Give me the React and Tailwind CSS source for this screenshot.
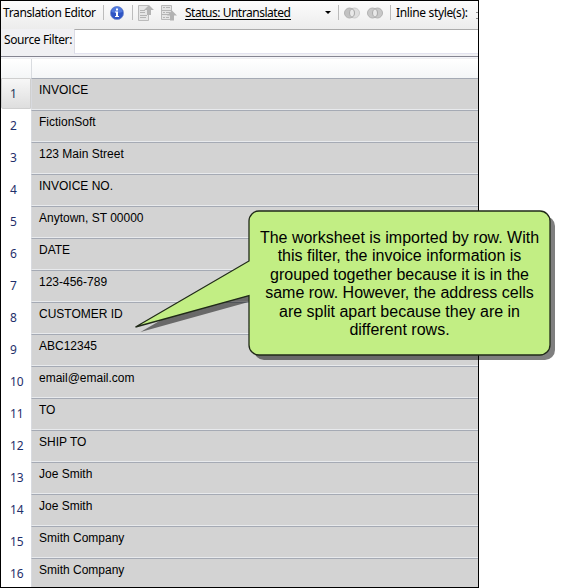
import React from "react";

const rows = [
  "INVOICE",
  "FictionSoft",
  "123 Main Street",
  "INVOICE NO.",
  "Anytown, ST 00000",
  "DATE",
  "123-456-789",
  "CUSTOMER ID",
  "ABC12345",
  "email@email.com",
  "TO",
  "SHIP TO",
  "Joe Smith",
  "Joe Smith",
  "Smith Company",
  "Smith Company",
];

const message = [
  "The worksheet is imported by row. With",
  "this filter, the invoice information is",
  "grouped together because it is in the",
  "same row. However, the address cells",
  "are split apart because they are in",
  "different rows.",
];

function Separator({ className }) {
  return <span className={`h-[15px] w-px shrink-0 bg-[#bcbcbc] ${className}`} />;
}

function InfoIcon() {
  return (
    <svg className="ml-[6px] shrink-0" width="14" height="14" viewBox="0 0 14 14">
      <circle cx="7" cy="7" r="6.6" fill="#2f55c4" stroke="#7d93cf" strokeWidth="0.8" />
      <path d="M1.5 6a5.5 5.5 0 0 1 11 0Q7 8 1.5 6z" fill="#5078dc" />
      <path d="M6 2.5h2v2H6zM5 5.5h3v4.5h1v1H5v-1h1V6.500H5z" fill="#fff" />
    </svg>
  );
}

function PageUpIcon({ low, className }) {
  return (
    <svg className={`shrink-0 ${className}`} width="16" height="16" viewBox="0 0 16 16">
      {low ? (
        <g>
          <path d="M.5.5h10v14H.5z" fill="#e4e4e4" stroke="#b9b9b9" />
          <path d="M.5 5.500h10M.5 9.500h10M2 2.500h2M5 2.500h4M2 7.500h2M5 7.500h4M2 12.500h2M5 12.500h3" stroke="#b4b4b4" />
          <path d="M11 5.500l5 5h-3V15.500H9v-5H6z" fill="#b2b2b2" />
        </g>
      ) : (
        <g>
          <path d="M.5.5h10v15H.5z" fill="#e6e6e6" stroke="#bbb" />
          <path d="M2 5.500h5M2 7.500h5M2 10.500h7M2 12.500h6" stroke="#b4b4b4" />
          <path d="M11 0l5 5h-3v5H9V5H6z" fill="#b4b4b4" />
        </g>
      )}
    </svg>
  );
}

function CirclesIcon({ variant, className }) {
  const joined = variant === "join";
  return (
    <svg className={`shrink-0 ${className}`} width="16" height="12" viewBox="0 0 16 12">
      <circle cx="10.500" cy="6" r="5" fill={joined ? "#c8c8c8" : "#dedede"} stroke={joined ? "#b2b2b2" : "#cacaca"} />
      <circle cx="5.500" cy="6" r="5" fill={joined ? "#c8c8c8" : "#c2c2c2"} stroke="#b2b2b2" />
      <path d="M8 1.700a5 5 0 0 1 0 8.600a5 5 0 0 1 0-8.600z" fill="#e9e9e9" stroke="#a6a6a6" strokeWidth="0.9" />
    </svg>
  );
}

function Toolbar() {
  return (
    <div className="flex h-[28px] shrink-0 items-center overflow-hidden bg-linear-to-b from-[#fcfcfc] to-[#ececec] pb-[5px] font-['Noto_Sans','Open_Sans',sans-serif] text-[12px] leading-[16px] whitespace-nowrap text-black">
      <span className="ml-[2px] w-[94px] shrink-0 tracking-[-0.38px]">Translation Editor</span>
      <Separator className="ml-[6px]" />
      <InfoIcon />
      <Separator className="ml-[8px]" />
      <PageUpIcon className="ml-[5px]" />
      <PageUpIcon low className="ml-[7px]" />
      <span className="mt-[2px] ml-[8px] w-[106px] shrink-0 border-b border-black leading-[12px] tracking-[-0.48px]">Status: Untranslated</span>
      <span className="ml-[34px] h-0 w-0 shrink-0 border-x-[3px] border-t-[3px] border-x-transparent border-t-black" />
      <Separator className="ml-[7px]" />
      <CirclesIcon className="ml-[5px]" />
      <CirclesIcon variant="join" className="ml-[7px]" />
      <Separator className="ml-[7px]" />
      <span className="ml-[5px] w-[73px] shrink-0 tracking-[-0.35px]">Inline style(s):</span>
      <span className="mt-[6px] ml-[7px] h-[7px] w-[2px] shrink-0 border-t border-b border-[#8c8c8c]" />
    </div>
  );
}

function Row({ text, number }) {
  return (
    <div className="flex h-[32px] shrink-0">
      <div
        className={`h-[31px] w-[30px] shrink-0 font-['Noto_Sans','Open_Sans',sans-serif] text-[12px] tracking-[-0.1px] ${
          number === 1
            ? "rounded-bl-[2px] border border-[#cfcfcf] bg-linear-to-b from-[#f7f7f7] to-[#dedede] pl-[8px] leading-[30px] text-[#1e395b]"
            : "bg-white pl-[9px] leading-[32px] text-[#1f2f6b]"
        }`}
      >
        {number}
      </div>
      <div className="min-w-0 flex-1 border-t border-b border-l border-t-[#a5aab4] border-b-[#e8eaed] border-l-[#d8dadf] bg-[#d3d3d3] pl-[7px] text-[12px] leading-[22px] text-black">
        {text}
      </div>
    </div>
  );
}

function Callout() {
  return (
    <div className="absolute top-[205px] left-[130px] h-[160px] w-[430px]">
      <svg className="absolute inset-0" width="430" height="160" viewBox="0 0 430 160">
        <path
          d="M129 6h281a10 10 0 0 1 10 10v124a10 10 0 0 1-10 10H129a10 10 0 0 1-10-10V90.500L5.500 122L119 56V16a10 10 0 0 1 10-10z"
          transform="translate(5 5)"
          fill="#000"
          fillOpacity="0.5"
        />
        <path
          d="M129 6h281a10 10 0 0 1 10 10v124a10 10 0 0 1-10 10H129a10 10 0 0 1-10-10V90.500L5.500 122L119 56V16a10 10 0 0 1 10-10z"
          fill="#c2ee84"
          stroke="#202a18"
          strokeWidth="1.300"
        />
      </svg>
      <div className="relative pt-[24px] pr-[10px] pl-[119px] text-center text-[16px] leading-[18.400px] whitespace-nowrap text-black">
        {message.map((line) => (
          <div key={line}>{line}</div>
        ))}
      </div>
    </div>
  );
}

export default function App() {
  return (
    <main className="relative h-[588px] w-[565px] overflow-hidden bg-white font-['Liberation_Sans',Arial,sans-serif]">
      <section className="flex h-[588px] w-[479px] flex-col overflow-hidden border border-black bg-white">
        <Toolbar />
        <div className="flex h-[27px] shrink-0 bg-[#f0f0f3] font-['Noto_Sans','Open_Sans',sans-serif] text-[12px] leading-[22px] text-black">
          <span className="w-[73px] shrink-0 pl-[3px] tracking-[-0.38px] whitespace-nowrap">Source Filter:</span>
          <div className="h-[25px] flex-1 border-t border-b border-l border-t-[#ababab] border-b-[#e3e3ef] border-l-[#dcdce6] bg-white" />
        </div>
        <div className="h-[2px] shrink-0 border-t border-b border-t-[#858591] border-b-[#f5f5fa]" />
        <div className="flex h-[20px] shrink-0 border-t border-[#efeff1] bg-linear-to-b from-white to-[#f4f6f7]">
          <div className="w-[31px] border-r border-[#d9dce0]" />
        </div>
        <div className="flex flex-col">
          {rows.map((text, index) => (
            <Row key={index} text={text} number={index + 1} />
          ))}
        </div>
      </section>
      <Callout />
    </main>
  );
}
